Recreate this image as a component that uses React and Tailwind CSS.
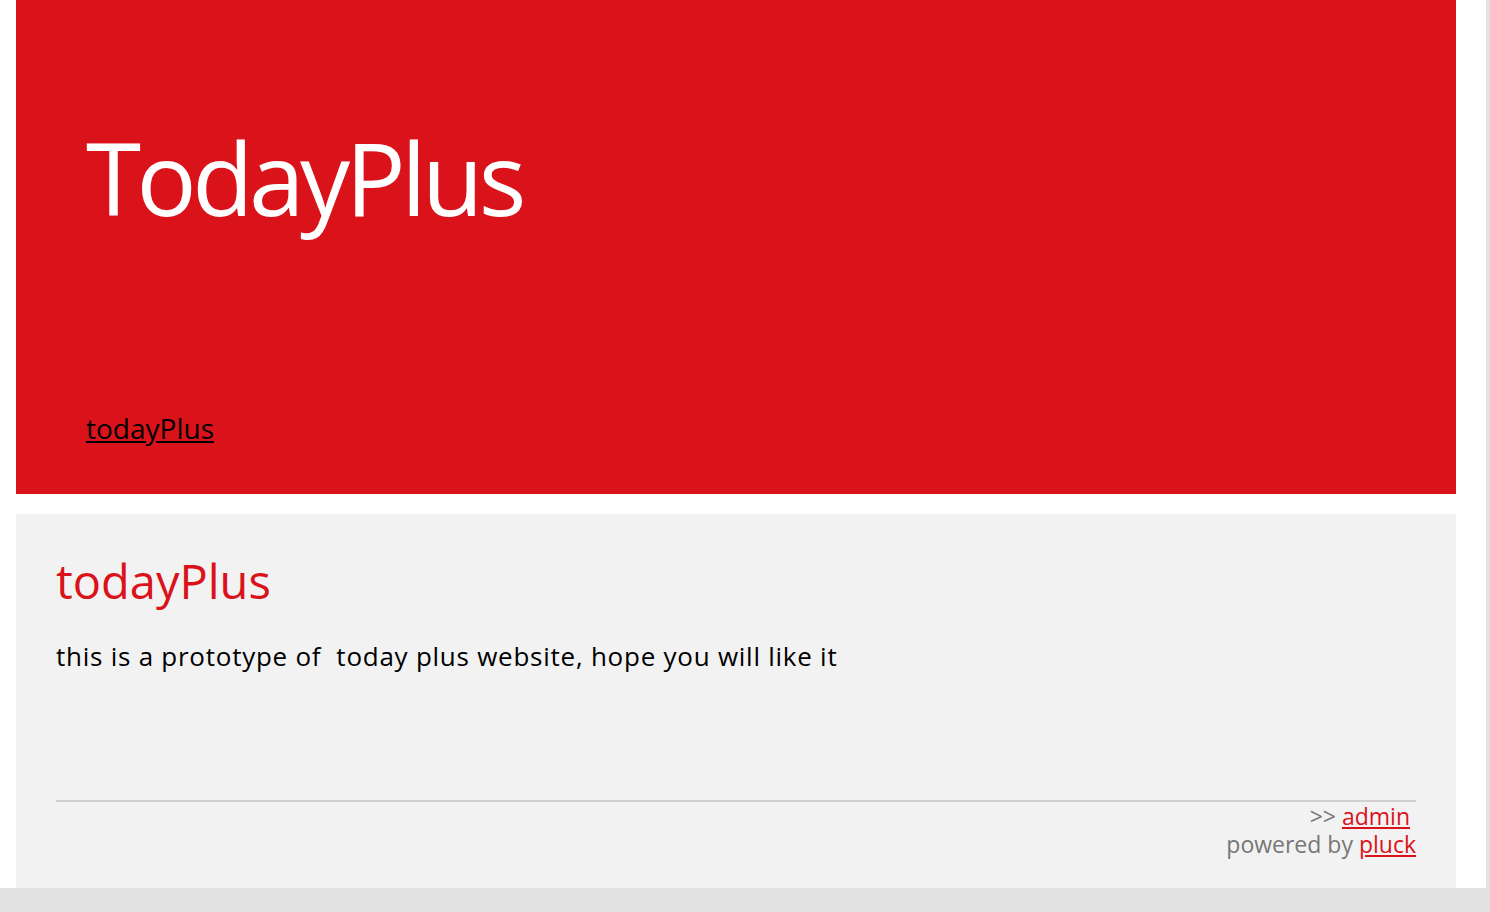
import React from "react";

export default function App() {
  return (
    <div className="min-h-[912px] bg-[#e2e2e2] font-['Open_Sans',_sans-serif]">
      <div className="w-[1486px] h-[888px] bg-white pl-4 pr-[30px]">
        <header className="h-[494px] bg-[#da131b] px-[70px] pt-[127px] flex flex-col">
          <h1 className="text-[100px] leading-none text-white tracking-[-4.5px]">TodayPlus</h1>
          <nav className="mt-auto pb-[49px]">
            <a href="#" className="text-[28px] leading-none text-black underline">todayPlus</a>
          </nav>
        </header>
        <main className="mt-5 h-[374px] bg-[#f2f2f2] px-10 pt-11 flex flex-col">
          <h2 className="text-[47px] leading-none text-[#da131b]">todayPlus</h2>
          <p className="mt-[38px] text-[26px] leading-none tracking-[0.75px] text-black whitespace-pre">this is a prototype of  today plus website, hope you will like it</p>
          <footer className="mt-auto mb-[30px] border-t-2 border-[#d0d0d0] text-right text-[23px] leading-[28px] text-[#777]">
            <div>&gt;&gt; <a href="#" className="text-[#da131b] underline">admin</a>&nbsp;</div>
            <div>powered by <a href="#" className="text-[#da131b] underline">pluck</a></div>
          </footer>
        </main>
      </div>
    </div>
  );
}
